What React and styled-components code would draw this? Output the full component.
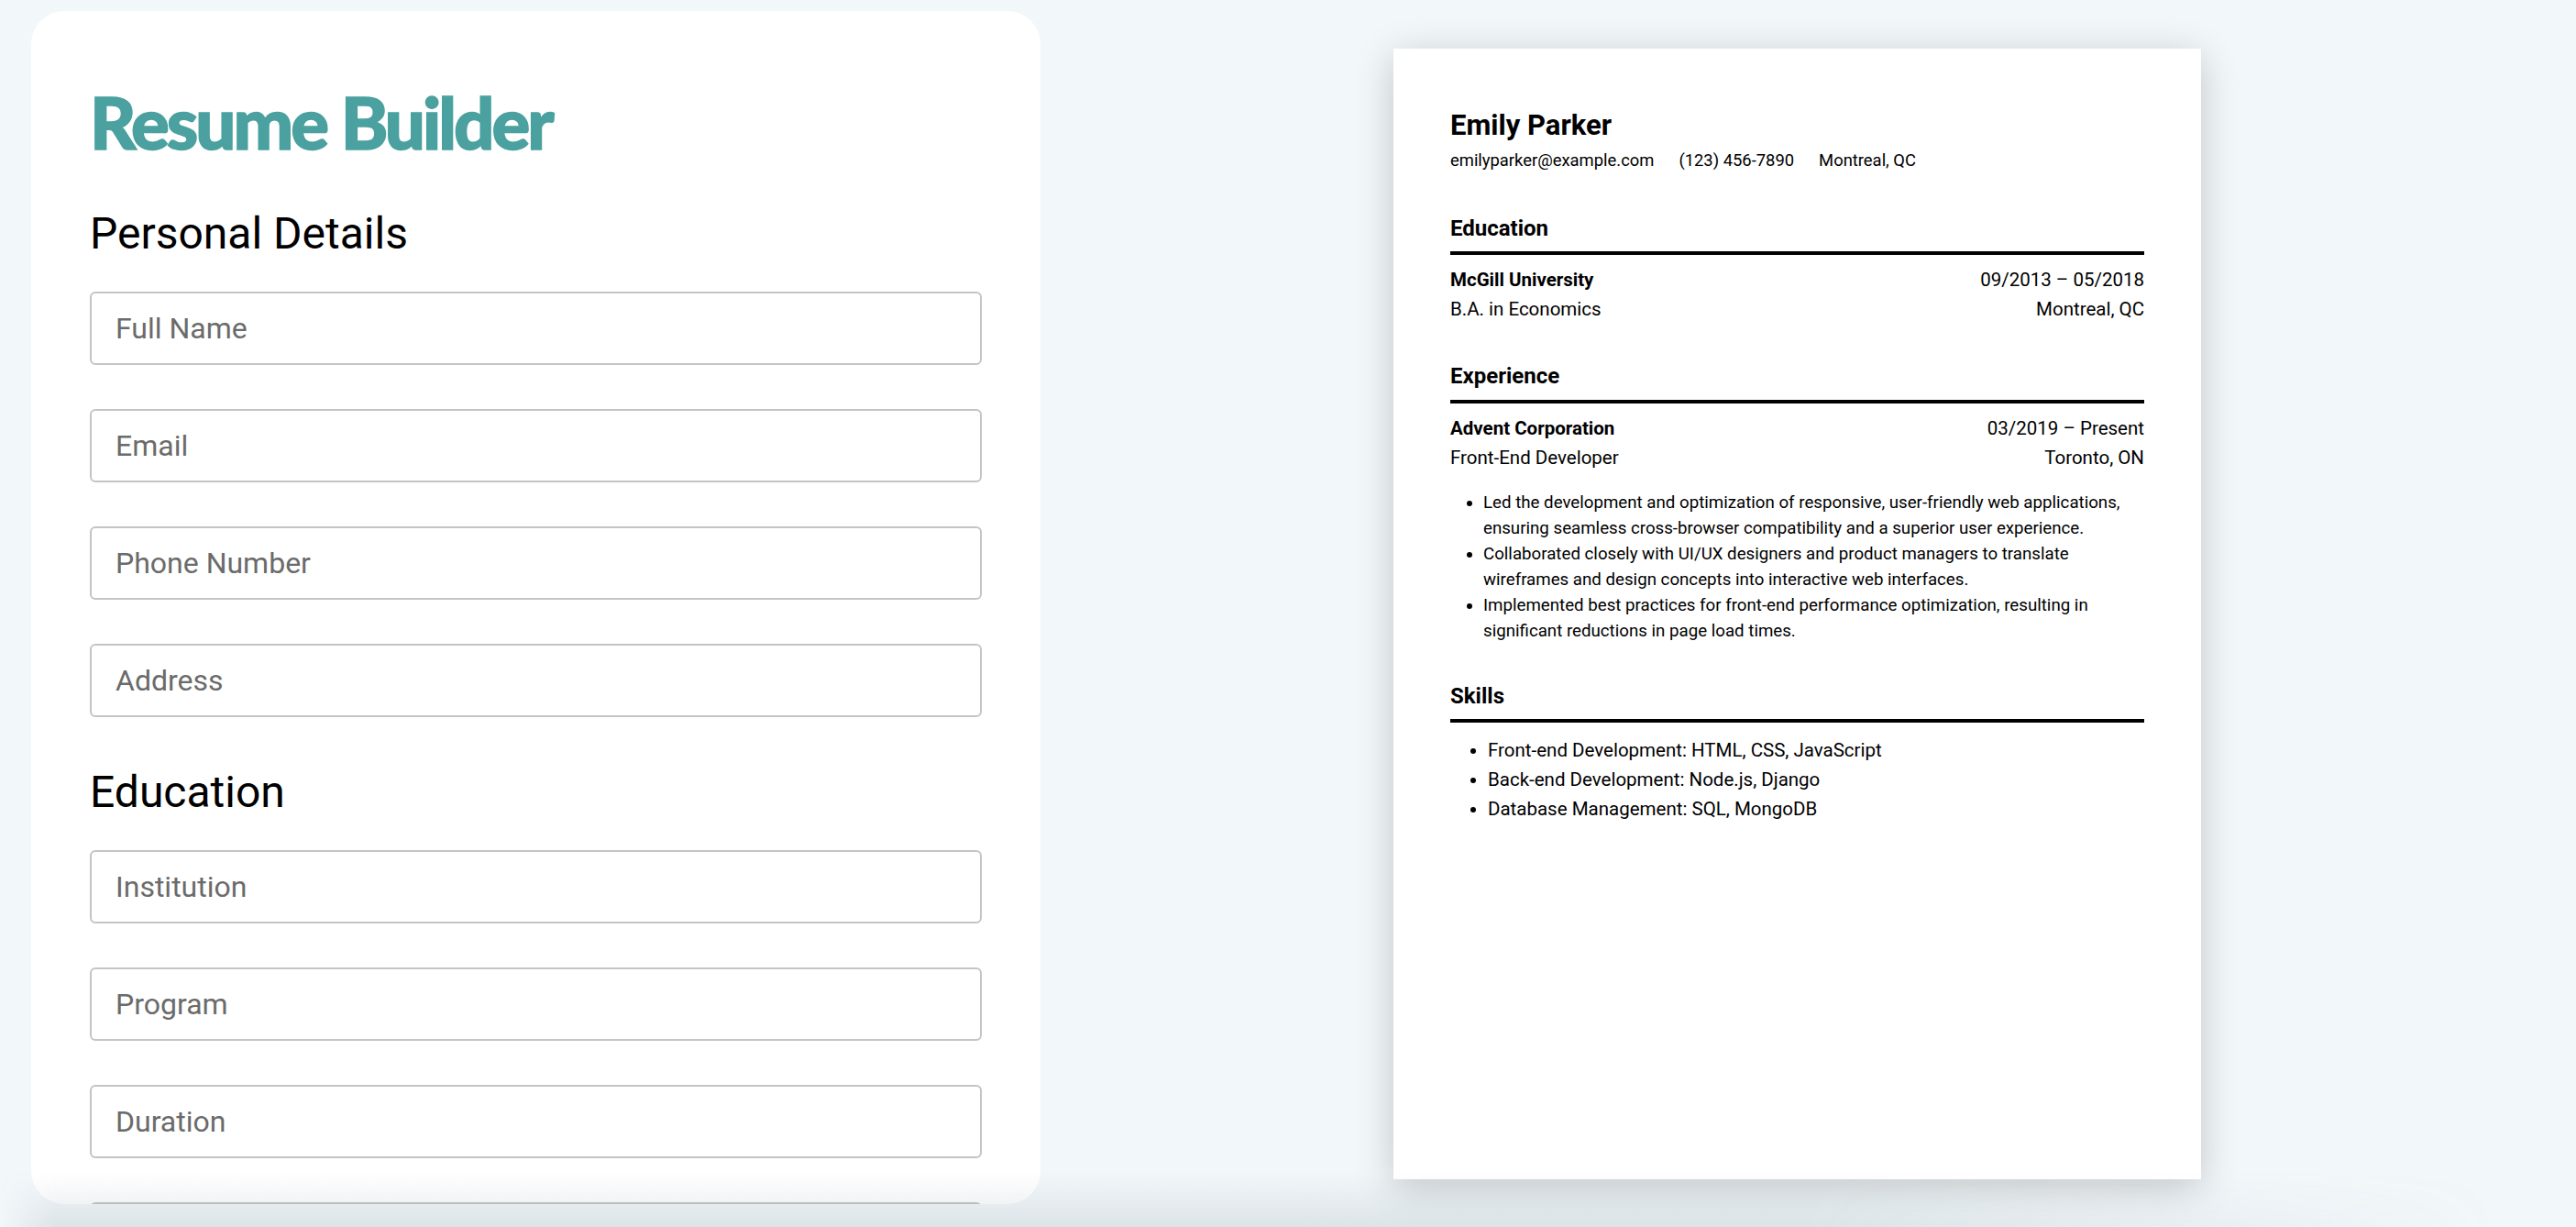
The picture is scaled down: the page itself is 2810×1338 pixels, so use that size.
import styled, { createGlobalStyle } from "styled-components";

const GlobalStyle = createGlobalStyle`
  html, body {
    margin: 0;
    padding: 0;
    height: 100%;
    overflow: hidden;
    background: #f2f7fa;
    font-family: Roboto, "Liberation Sans", sans-serif;
  }
`;

const personalFields = ["Full Name", "Email", "Phone Number", "Address"];
const educationFields = ["Institution", "Program", "Duration", "Location"];

const experienceBullets = [
  "Led the development and optimization of responsive, user-friendly web applications, ensuring seamless cross-browser compatibility and a superior user experience.",
  "Collaborated closely with UI/UX designers and product managers to translate wireframes and design concepts into interactive web interfaces.",
  "Implemented best practices for front-end performance optimization, resulting in significant reductions in page load times.",
];

const skills = [
  "Front-end Development: HTML, CSS, JavaScript",
  "Back-end Development: Node.js, Django",
  "Database Management: SQL, MongoDB",
];

const App = () => {
  return (
    <>
      <GlobalStyle />
      <Page>
        <EditorPanel>
          <Title>Resume Builder</Title>

          <SectionTitle>Personal Details</SectionTitle>
          {personalFields.map((field) => (
            <Input key={field} placeholder={field} />
          ))}

          <SectionTitle>Education</SectionTitle>
          {educationFields.map((field) => (
            <Input key={field} placeholder={field} />
          ))}

          <SectionTitle>Experience</SectionTitle>
          <Input placeholder="Company" />
        </EditorPanel>

        <PreviewArea>
          <Sheet>
            <Name>Emily Parker</Name>
            <Contact>
              <span>emilyparker@example.com</span>
              <span>(123) 456-7890</span>
              <span>Montreal, QC</span>
            </Contact>

            <Section>
              <SectionHeading>Education</SectionHeading>
              <Row>
                <strong>McGill University</strong>
                <span>09/2013 – 05/2018</span>
              </Row>
              <Row>
                <span>B.A. in Economics</span>
                <span>Montreal, QC</span>
              </Row>
            </Section>

            <Section>
              <SectionHeading>Experience</SectionHeading>
              <Row>
                <strong>Advent Corporation</strong>
                <span>03/2019 – Present</span>
              </Row>
              <Row>
                <span>Front-End Developer</span>
                <span>Toronto, ON</span>
              </Row>
              <BulletList>
                {experienceBullets.map((b, i) => (
                  <li key={i}>{b}</li>
                ))}
              </BulletList>
            </Section>

            <Section>
              <SectionHeading>Skills</SectionHeading>
              <SkillList>
                {skills.map((s) => (
                  <li key={s}>{s}</li>
                ))}
              </SkillList>
            </Section>
          </Sheet>
        </PreviewArea>
      </Page>
      <BottomFade />
    </>
  );
};
export default App;

const Page = styled.div`
  display: flex;
  height: 100vh;
  box-sizing: border-box;
  padding: 12px 34px 25px;
`;

// flex column so heading/input margins add up instead of collapsing
const EditorPanel = styled.div`
  width: 1101px;
  flex-shrink: 0;
  box-sizing: border-box;
  display: flex;
  flex-direction: column;
  background: #ffffff;
  border-radius: 36px;
  padding: 82px 64px 64px;
  overflow: hidden;
`;

const Title = styled.h1`
  margin: 0 0 49px;
  font-family: Lato, "Open Sans", sans-serif;
  font-weight: 900;
  font-size: 78px;
  line-height: 1;
  letter-spacing: -3px;
  color: #4aa19f;
  -webkit-text-stroke: 1.5px #4aa19f;
`;

const SectionTitle = styled.h2`
  margin: 4px 0 33px;
  font-family: Roboto, sans-serif;
  font-weight: 400;
  font-size: 48px;
  line-height: 60px;
  color: #000;
`;

const Input = styled.input`
  display: block;
  flex-shrink: 0;
  width: 100%;
  height: 80px;
  box-sizing: border-box;
  margin: 0 0 48px;
  padding: 0 26px;
  border: 2px solid #c4c4c4;
  border-radius: 6px;
  font-family: Roboto, sans-serif;
  font-size: 32px;
  color: #222;
  background: #fff;
  outline: none;

  &::placeholder {
    color: #6b6b6b;
  }
`;

const PreviewArea = styled.div`
  flex: 1;
  display: flex;
  justify-content: center;
  align-items: flex-start;
  padding: 41px 0 0 10px;
`;

const Sheet = styled.div`
  width: 881px;
  height: 1233px;
  flex-shrink: 0;
  box-sizing: border-box;
  padding: 65px 62px 64px;
  background: #fff;
  box-shadow: 0 8px 40px rgba(0, 0, 0, 0.2);
  color: #000;
`;

const Name = styled.div`
  font-weight: 700;
  font-size: 31px;
  line-height: 37px;
`;

const Contact = styled.div`
  display: flex;
  gap: 27px;
  margin-top: 6px;
  padding-bottom: 4px;
  font-size: 18.4px;
  line-height: 27px;
`;

const Section = styled.div`
  margin-top: 43px;
`;

const SectionHeading = styled.div`
  font-weight: 700;
  font-size: 24px;
  line-height: 28.6px;
  padding-bottom: 10.7px;
  border-bottom: 4px solid #000;
  margin-bottom: 11px;
`;

const Row = styled.div`
  display: flex;
  justify-content: space-between;
  font-size: 20.5px;
  line-height: 32px;

  strong {
    font-weight: 700;
  }
`;

const BulletList = styled.ul`
  margin: 19px 0 0;
  padding-left: 36px;
  font-size: 18.7px;
  line-height: 28px;
`;

const SkillList = styled.ul`
  margin: 14px 0 0;
  padding-left: 41px;
  font-size: 20.5px;
  line-height: 32px;
`;

// soft grey shadow band along the bottom of the window
const BottomFade = styled.div`
  position: fixed;
  left: 0;
  right: 0;
  bottom: 0;
  height: 60px;
  pointer-events: none;
  background: linear-gradient(to bottom, rgba(100, 120, 130, 0), rgba(100, 120, 130, 0.15));
  -webkit-mask-image: linear-gradient(to right, transparent 0, #000 60px, #000 70%, transparent 97%);
  mask-image: linear-gradient(to right, transparent 0, #000 60px, #000 70%, transparent 97%);
`;
